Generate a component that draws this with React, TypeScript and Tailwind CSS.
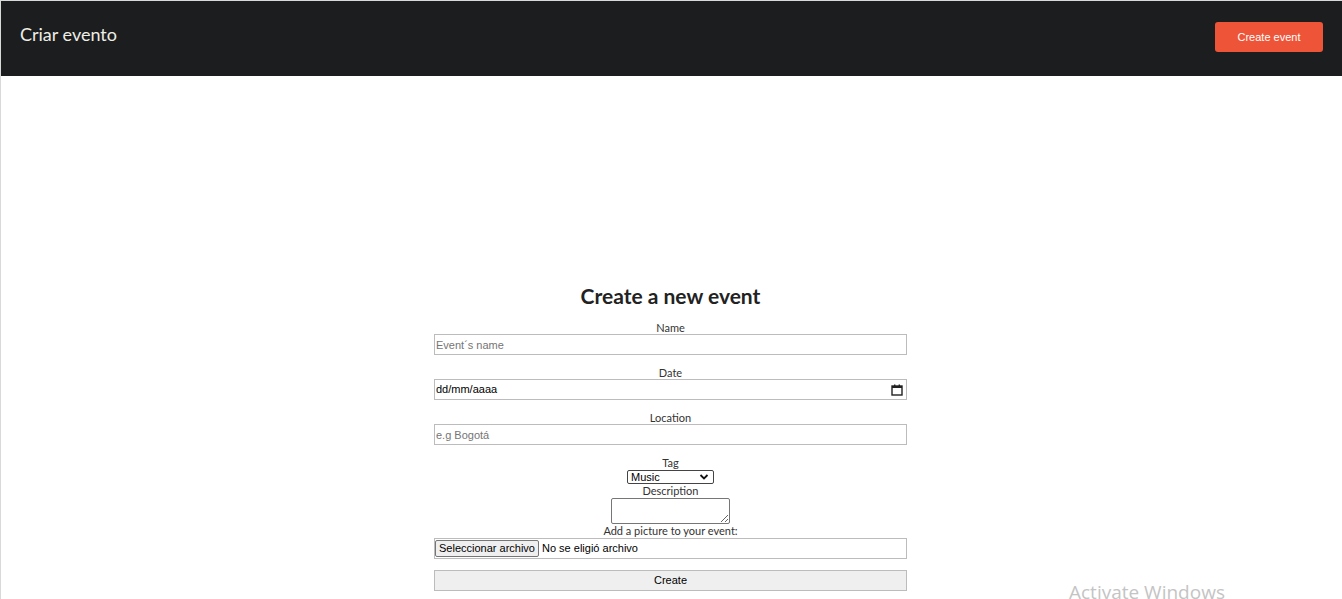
export default function App() {
  return (
    <div className="relative min-h-screen h-[599px] overflow-hidden bg-white font-['Lato',sans-serif]">
      <header className="flex items-center justify-between h-[76px] bg-[#1c1d1f] pl-5 pr-[19px]">
        <h1 className="text-[18px] text-[#eeeee6] -mt-[7px]">Criar evento</h1>
        <button className="h-[30px] w-[108px] rounded-[3px] bg-[#ee5538] text-white text-[11px] font-['Liberation_Sans',Arial,sans-serif] -mt-[2px]">
          Create event
        </button>
      </header>

      <main className="flex justify-center pt-[208px] pr-px">
        <form className="flex flex-col items-center w-[473px] text-[#333]">
          <h2 className="text-[21px] leading-[24px] font-bold text-[#222] mb-[13px]">Create a new event</h2>

          <label className="text-[11px] leading-[13px]">Name</label>
          <input
            type="text"
            placeholder="Event´s name"
            className="w-full h-[21px] mb-[11px] px-[1px] border border-[#bcbcbc] text-[11px] font-['Liberation_Sans',Arial,sans-serif] placeholder:text-[#757575] outline-none"
          />

          <label className="text-[11px] leading-[13px]">Date</label>
          <div className="flex items-center justify-between w-full h-[21px] mb-[11px] pl-[1px] pr-[3px] border border-[#bcbcbc] text-[11px] text-black font-['Liberation_Sans',Arial,sans-serif]">
            <span>dd/mm/aaaa</span>
            <svg width="12" height="12" viewBox="0 0 12 12" fill="none">
              <rect x="1" y="2" width="10" height="9" stroke="#222" strokeWidth="1.4" />
              <rect x="1" y="2" width="10" height="2" fill="#222" />
              <rect x="3" y="0.5" width="1.4" height="2" fill="#222" />
              <rect x="7.6" y="0.5" width="1.4" height="2" fill="#222" />
            </svg>
          </div>

          <label className="text-[11px] leading-[13px]">Location</label>
          <input
            type="text"
            placeholder="e.g Bogotá"
            className="w-full h-[21px] mb-[11px] px-[1px] border border-[#bcbcbc] text-[11px] font-['Liberation_Sans',Arial,sans-serif] placeholder:text-[#757575] outline-none"
          />

          <label className="text-[11px] leading-[13px]">Tag</label>
          <div className="relative w-[87px] h-[14px] mt-[1px]">
            <select className="block appearance-none w-full h-[14px] py-0 pl-[3px] border border-[#444] rounded-[2px] text-[11px] leading-[12px] text-black font-['Liberation_Sans',Arial,sans-serif] outline-none">
              <option>Music</option>
              <option>Sports</option>
              <option>Art</option>
            </select>
            <svg className="absolute right-[5px] top-[3px] pointer-events-none" width="10" height="8" viewBox="0 0 10 8" fill="none">
              <path d="M1.5 2l3.5 3.5L8.5 2" stroke="#111" strokeWidth="1.8" />
            </svg>
          </div>

          <label className="text-[11px] leading-[13px]">Description</label>
          <textarea className="block w-[119px] h-[26px] mt-[1px] border border-[#767676] rounded-[2px] text-[11px] outline-none" />

          <label className="text-[11px] leading-[13px]">Add a picture to your event:</label>
          <div className="flex items-center w-full h-[21px] mt-[1px] mb-[11px] border border-[#bcbcbc] text-[11px] text-black font-['Liberation_Sans',Arial,sans-serif]">
            <button type="button" className="h-[17px] px-[3px] mr-[3px] bg-[#efefef] border border-[#767676] rounded-[2px] leading-none">
              Seleccionar archivo
            </button>
            <span>No se eligió archivo</span>
          </div>

          <button type="submit" className="w-full h-[21px] bg-[#efefef] border border-[#bcbcbc] text-[11px] text-black font-['Liberation_Sans',Arial,sans-serif]">
            Create
          </button>
        </form>
      </main>

      <div className="absolute inset-0 border-t border-l border-[#d9d9d9] pointer-events-none" />

      <div className="absolute left-[1069px] top-[579px] text-[19px] leading-[26px] text-[#c4c4c4] font-['Open_Sans',sans-serif] pointer-events-none">
        Activate Windows
      </div>
    </div>
  );
}
